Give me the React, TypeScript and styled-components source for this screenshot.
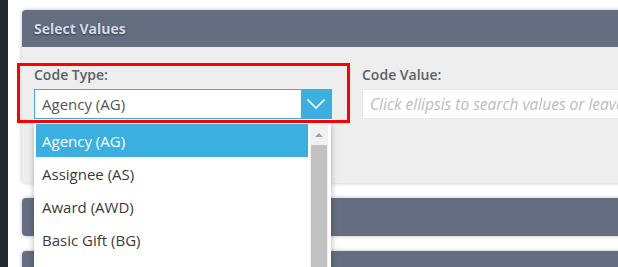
import React from 'react';
import styled, { createGlobalStyle } from 'styled-components';

const GlobalStyle = createGlobalStyle`
  html, body {
    margin: 0;
    padding: 0;
    background: #ffffff;
    overflow: hidden;
    font-family: 'Open Sans', 'Noto Sans', sans-serif;
  }
`;

const HEADER_BG = '#646e80';
const BLUE = '#3bafdf';

const Page = styled.div`
  display: flex;
  width: 618px;
  height: 267px;
  overflow: hidden;
`;

const Sidebar = styled.div`
  width: 8px;
  flex-shrink: 0;
  background: #22292f;
`;

const Main = styled.div`
  flex: 1;
  padding: 10px 0 0 14px;
  display: flex;
  flex-direction: column;
  gap: 15px;
  min-width: 0;
`;

const Panel = styled.div`
  width: 700px;
  border-radius: 4px;
  background: #eeeeee;
  box-shadow: 0 0 4px rgba(0, 0, 0, 0.25);
  flex-shrink: 0;
`;

const PanelHeader = styled.div<{ $height: number }>`
  height: ${(p) => p.$height}px;
  background: ${HEADER_BG};
  border-radius: 4px 4px 0 0;
  display: flex;
  align-items: center;
  padding-left: 12px;
  font-size: 14px;
  font-weight: 700;
  color: #d3dbe6;
  text-shadow: 0 1px 2px rgba(0, 0, 0, 0.5);
  &:only-child {
    border-radius: 4px;
  }
`;

const PanelBody = styled.div`
  height: 136px;
  box-sizing: border-box;
  padding: 18px 12px 0;
  display: flex;
  gap: 30px;
`;

const Field = styled.div<{ $width: number }>`
  position: relative;
  width: ${(p) => p.$width}px;
  display: flex;
  flex-direction: column;
  gap: 4px;
`;

const Label = styled.div`
  font-size: 14px;
  line-height: 20px;
  font-weight: 600;
  color: #5b5f66;
`;

const SelectBox = styled.div`
  height: 30px;
  box-sizing: border-box;
  border: 1px solid ${BLUE};
  background: #ffffff;
  display: flex;
  align-items: stretch;
`;

const SelectValue = styled.div`
  flex: 1;
  display: flex;
  align-items: center;
  padding-left: 7px;
  font-size: 15px;
  color: #555;
`;

const SelectButton = styled.div`
  width: 30px;
  background: ${BLUE};
  display: flex;
  align-items: center;
  justify-content: center;
`;

const TextInput = styled.div`
  height: 30px;
  box-sizing: border-box;
  border: 1px solid #e8e8e8;
  background: #ffffff;
  display: flex;
  align-items: center;
  padding-left: 7px;
  white-space: nowrap;
  overflow: hidden;
  font-size: 15.5px;
  font-style: italic;
  color: #bcbcbc;
`;

const Highlight = styled.div`
  position: absolute;
  left: -17px;
  top: -2px;
  width: 333px;
  height: 60px;
  box-sizing: border-box;
  border: 3px solid #ff0000;
  pointer-events: none;
`;

const Dropdown = styled.div`
  position: absolute;
  left: 0;
  top: 58px;
  width: 297px;
  height: 160px;
  box-sizing: border-box;
  padding: 1px 3px 0 2px;
  background: #ffffff;
  box-shadow: 0 2px 6px rgba(0, 0, 0, 0.3);
  display: flex;
  gap: 2px;
  z-index: 5;
`;

const OptionList = styled.ul`
  flex: 1;
  margin: 0;
  padding: 0;
  list-style: none;
`;

const OptionItem = styled.li<{ $active?: boolean }>`
  height: 33px;
  display: flex;
  align-items: center;
  padding-left: 6px;
  font-size: 15px;
  color: ${(p) => (p.$active ? '#ffffff' : '#3a3a3a')};
  background: ${(p) => (p.$active ? BLUE : 'transparent')};
  white-space: nowrap;
`;

const Scrollbar = styled.div`
  width: 18px;
  background: #f1f1f1;
  display: flex;
  flex-direction: column;
`;

const ScrollArrow = styled.div`
  height: 21px;
  display: flex;
  align-items: center;
  justify-content: center;
  &::before {
    content: '';
    border-left: 4px solid transparent;
    border-right: 4px solid transparent;
    border-bottom: 4px solid #a3a3a3;
  }
`;

const ScrollThumb = styled.div`
  flex: 1;
  margin: 0 1px;
  background: #c1c1c1;
`;

const options = [
  'Agency (AG)',
  'Assignee (AS)',
  'Award (AWD)',
  'Basic Gift (BG)',
  'Business Code (BC)',
];

function Chevron() {
  return (
    <svg width="20" height="12" viewBox="0 0 20 12" fill="none">
      <path d="M1.5 1.5 L10 10 L18.5 1.5" stroke="#ffffff" strokeWidth="1.6" />
    </svg>
  );
}

export default function App() {
  return (
    <>
      <GlobalStyle />
      <Page>
        <Sidebar />
        <Main>
          <Panel>
            <PanelHeader $height={37}>Select Values</PanelHeader>
            <PanelBody>
              <Field $width={298}>
                <Highlight />
                <Label>Code Type:</Label>
                <SelectBox>
                  <SelectValue>Agency (AG)</SelectValue>
                  <SelectButton>
                    <Chevron />
                  </SelectButton>
                </SelectBox>
                <Dropdown>
                  <OptionList>
                    {options.map((o, i) => (
                      <OptionItem key={o} $active={i === 0}>
                        {o}
                      </OptionItem>
                    ))}
                  </OptionList>
                  <Scrollbar>
                    <ScrollArrow />
                    <ScrollThumb />
                  </Scrollbar>
                </Dropdown>
              </Field>
              <Field $width={320}>
                <Label>Code Value:</Label>
                <TextInput>Click ellipsis to search values or leave blank</TextInput>
              </Field>
            </PanelBody>
          </Panel>
          <Panel>
            <PanelHeader $height={38} />
          </Panel>
          <Panel>
            <PanelHeader $height={38} />
          </Panel>
        </Main>
      </Page>
    </>
  );
}
